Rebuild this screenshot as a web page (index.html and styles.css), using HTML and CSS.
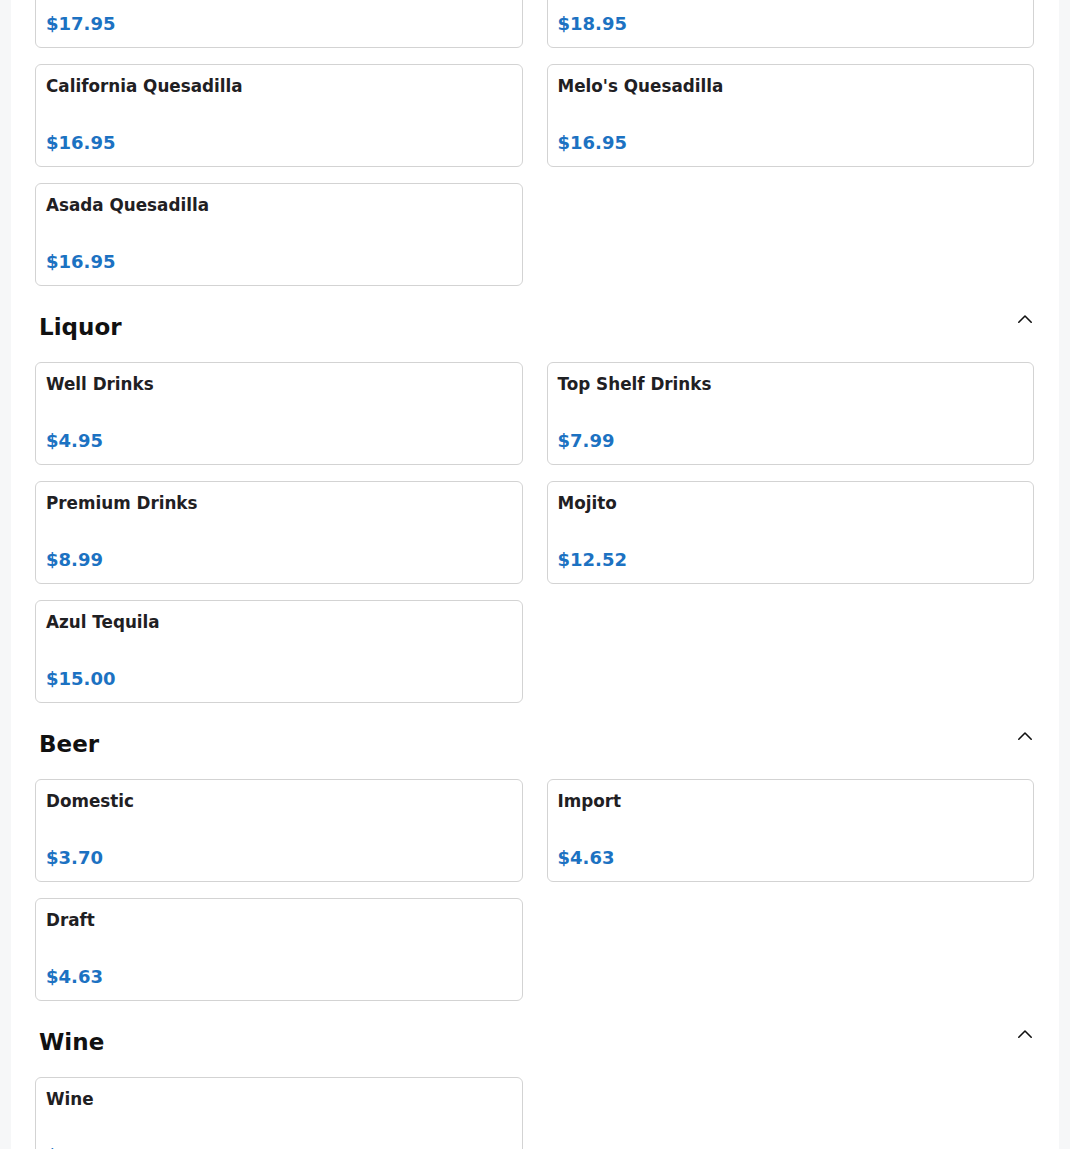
FILE: index.html
```html
<!DOCTYPE html>
<html lang="en">
<head>
<meta charset="utf-8">
<title>Menu</title>
<link rel="stylesheet" href="styles.css">
</head>
<body>
<main class="page">
  <section class="section">
    <div class="grid">
      <div class="card"><div class="name">Shrimp Quesadilla</div><div class="price">$17.95</div></div>
      <div class="card"><div class="name">Seafood Quesadilla</div><div class="price">$18.95</div></div>
      <div class="card"><div class="name">California Quesadilla</div><div class="price">$16.95</div></div>
      <div class="card"><div class="name">Melo's Quesadilla</div><div class="price">$16.95</div></div>
      <div class="card"><div class="name">Asada Quesadilla</div><div class="price">$16.95</div></div>
    </div>
  </section>

  <section class="section">
    <div class="section-head">
      <h2 class="section-title">Liquor</h2>
      <svg class="chevron" viewBox="0 0 16 16" width="16" height="16"><path d="M1.8 11.2 L8 5 L14.2 11.2" fill="none" stroke="#111" stroke-width="1.6" stroke-linecap="round" stroke-linejoin="round"/></svg>
    </div>
    <div class="grid">
      <div class="card"><div class="name">Well Drinks</div><div class="price">$4.95</div></div>
      <div class="card"><div class="name">Top Shelf Drinks</div><div class="price">$7.99</div></div>
      <div class="card"><div class="name">Premium Drinks</div><div class="price">$8.99</div></div>
      <div class="card"><div class="name">Mojito</div><div class="price">$12.52</div></div>
      <div class="card"><div class="name">Azul Tequila</div><div class="price">$15.00</div></div>
    </div>
  </section>

  <section class="section">
    <div class="section-head">
      <h2 class="section-title">Beer</h2>
      <svg class="chevron" viewBox="0 0 16 16" width="16" height="16"><path d="M1.8 11.2 L8 5 L14.2 11.2" fill="none" stroke="#111" stroke-width="1.6" stroke-linecap="round" stroke-linejoin="round"/></svg>
    </div>
    <div class="grid">
      <div class="card"><div class="name">Domestic</div><div class="price">$3.70</div></div>
      <div class="card"><div class="name">Import</div><div class="price">$4.63</div></div>
      <div class="card"><div class="name">Draft</div><div class="price">$4.63</div></div>
    </div>
  </section>

  <section class="section">
    <div class="section-head">
      <h2 class="section-title">Wine</h2>
      <svg class="chevron" viewBox="0 0 16 16" width="16" height="16"><path d="M1.8 11.2 L8 5 L14.2 11.2" fill="none" stroke="#111" stroke-width="1.6" stroke-linecap="round" stroke-linejoin="round"/></svg>
    </div>
    <div class="grid">
      <div class="card"><div class="name">Wine</div><div class="price">$6.95</div></div>
    </div>
  </section>
</main>
</body>
</html>
```

FILE: styles.css
```css
* { box-sizing: border-box; }

html, body {
  margin: 0;
  padding: 0;
  background: #f6f7f8;
  font-family: "DejaVu Sans", "Noto Sans", sans-serif;
  color: #212529;
}

.page {
  width: 1048px;
  margin: -55px auto 0;
  background: #ffffff;
  padding: 0 25px 40px 24px;
}

.section + .section {
  margin-top: 27px;
}

.section-head {
  display: flex;
  justify-content: space-between;
  align-items: flex-start;
  padding: 0 1px 0 4px;
  margin-bottom: 20px;
}

.section-title {
  margin: 0;
  font-size: 23px;
  line-height: 29px;
  font-weight: 700;
  color: #111111;
}

.chevron {
  display: block;
  margin-top: -2px;
}

.grid {
  display: grid;
  grid-template-columns: 1fr 1fr;
  column-gap: 24px;
  row-gap: 16px;
}

.card {
  border: 1px solid #d3d3d3;
  border-radius: 6px;
  padding: 10px;
  display: flex;
  flex-direction: column;
  gap: 31px;
}

.name {
  font-size: 16.8px;
  line-height: 23px;
  font-weight: 700;
  color: #1f2023;
}

.price {
  font-size: 18px;
  line-height: 27px;
  font-weight: 700;
  color: #1c72c2;
}
```
